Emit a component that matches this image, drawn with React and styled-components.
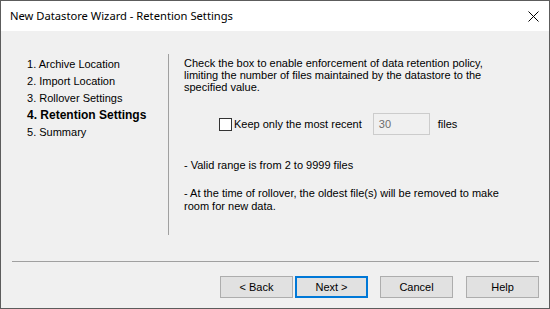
import styled, { createGlobalStyle } from 'styled-components';

const Global = createGlobalStyle`
  html, body { margin: 0; padding: 0; background: #f0f0f0; }
  body { font-family: "Liberation Sans", Arial, sans-serif; font-size: 11px; color: #000; }
`;

const steps = ['Archive Location', 'Import Location', 'Rollover Settings', 'Retention Settings', 'Summary'];
const current = 3;

function App() {
    return <>
        <Global />
        <Window>
            <TitleBar>
                <Title>New Datastore Wizard - Retention Settings</Title>
                <CloseIcon width="11" height="11" viewBox="0 0 11 11">
                    <path d="M0.5 0.5 L10.5 10.5 M10.5 0.5 L0.5 10.5" stroke="#000" strokeWidth="1" />
                </CloseIcon>
            </TitleBar>

            <Body>
                <Main>
                    <StepList>
                        {steps.map((s, i) => (
                            <Step key={s} $active={i === current}>{i + 1}. {s}</Step>
                        ))}
                    </StepList>
                    <Divider />
                    <Content>
                        <Para>
                            Check the box to enable enforcement of data retention policy,<br />
                            limiting the number of files maintained by the datastore to the<br />
                            specified value.
                        </Para>
                        <KeepRow>
                            <CheckBox />
                            <span>Keep only the most recent</span>
                            <NumberBox>30</NumberBox>
                            <span>files</span>
                        </KeepRow>
                        <Note>- Valid range is from 2 to 9999 files</Note>
                        <Note>
                            - At the time of rollover, the oldest file(s) will be removed to make<br />
                            room for new data.
                        </Note>
                    </Content>
                </Main>

                <Rule />

                <Buttons>
                    <Button>&lt; Back</Button>
                    <Button $primary $gap={2}>Next &gt;</Button>
                    <Button $gap={12}>Cancel</Button>
                    <Button $gap={13}>Help</Button>
                </Buttons>
            </Body>
        </Window>
    </>
}

const Window = styled.div`
    width: 550px;
    height: 309px;
    box-sizing: border-box;
    border: 1px solid #5c5c5c;
    display: flex;
    flex-direction: column;
    background: #f0f0f0;
`;

const TitleBar = styled.div`
    height: 30px;
    background: #fff;
    display: flex;
    align-items: center;
    justify-content: space-between;
    padding: 0 10px 0 9px;
`;

const Title = styled.span`
    font-family: "Noto Sans", sans-serif;
    font-size: 11.2px;
    color: #000;
    margin-top: -1px;
`;

const CloseIcon = styled.svg`
    display: block;
    margin-top: 1px;
`;

const Body = styled.div`
    flex: 1;
    display: flex;
    flex-direction: column;
    padding: 23px 10px 0 11px;
`;

const Main = styled.div`
    display: flex;
    height: 181px;
`;

const StepList = styled.ul`
    list-style: none;
    margin: 0;
    padding: 2px 0 0 15px;
    width: 141px;
`;

const Step = styled.li`
    line-height: 17px;
    height: 17px;
    font-weight: ${p => p.$active ? 'bold' : 'normal'};
    font-size: ${p => p.$active ? '12px' : '11px'};
`;

const Divider = styled.div`
    width: 1px;
    background: #a0a0a0;
`;

const Content = styled.div`
    flex: 1;
    padding: 3px 0 0 15px;
`;

const Para = styled.p`
    margin: 0;
    line-height: 12px;
`;

const KeepRow = styled.div`
    display: flex;
    align-items: center;
    margin: 20px 0 0 35px;
    span { line-height: 13px; }
`;

const CheckBox = styled.div`
    width: 11px;
    height: 11px;
    border: 1px solid #333;
    background: #fff;
    margin-right: 2px;
`;

const NumberBox = styled.div`
    width: 50px;
    height: 20px;
    border: 1px solid #cccccc;
    background: #f0f0f0;
    color: #6d6d6d;
    padding-left: 5px;
    line-height: 20px;
    margin: 0 8px 0 11px;
`;

const Note = styled.p`
    margin: 24px 0 0;
    line-height: 13px;
    & + & { margin-top: 15px; }
`;

const Rule = styled.div`
    height: 1px;
    background: #a0a0a0;
    margin-top: 26px;
`;

const Buttons = styled.div`
    display: flex;
    justify-content: flex-end;
    margin-top: 14px;
`;

const Button = styled.button`
    width: 73px;
    height: 22px;
    box-sizing: border-box;
    margin-left: ${p => (p.$gap || 0) + 'px'};
    background: #e1e1e1;
    border: ${p => p.$primary ? '2px solid #0078d7' : '1px solid #adadad'};
    font-family: "Liberation Sans", Arial, sans-serif;
    font-size: 11px;
    color: #000;
    padding: 0;
`;

export default App
